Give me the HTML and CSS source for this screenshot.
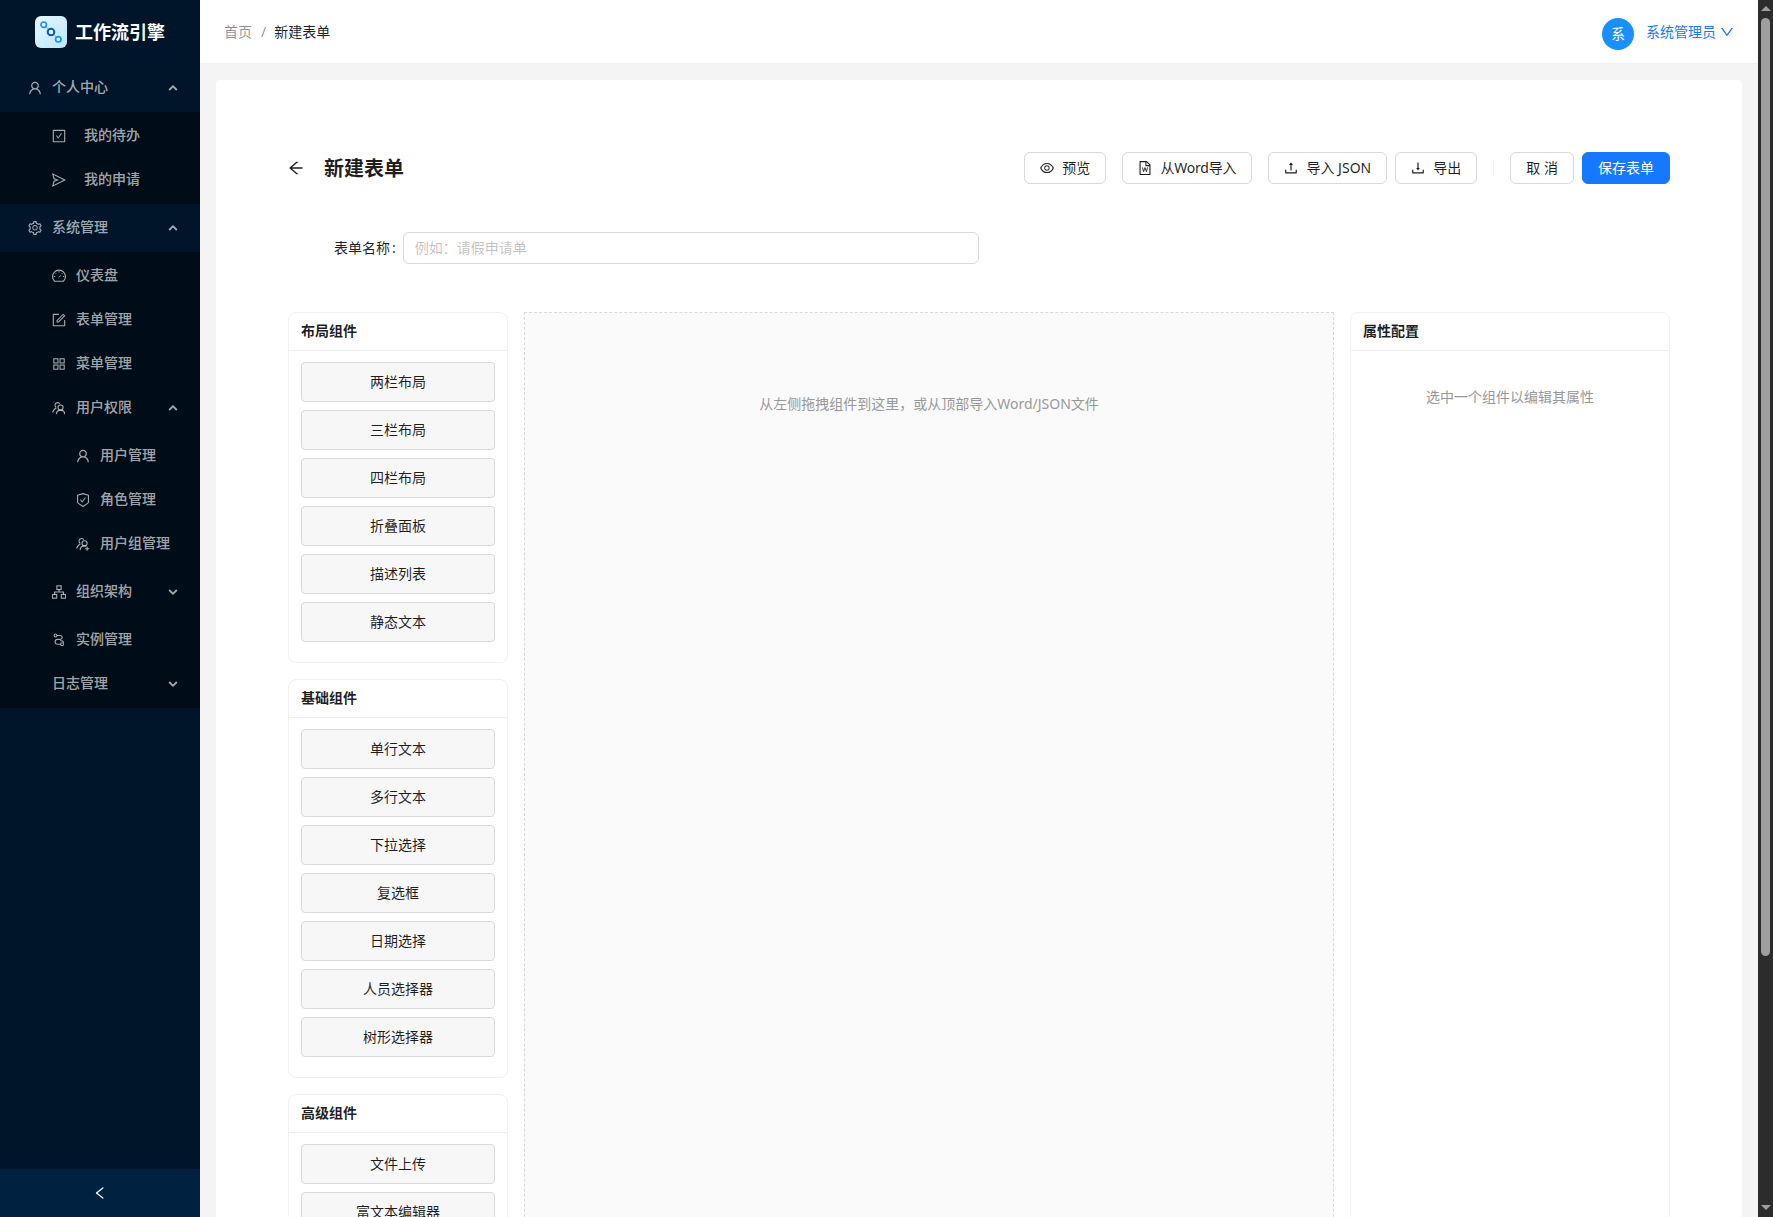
FILE: index.html
```html
<!DOCTYPE html>
<html lang="zh-CN">
<head>
<meta charset="utf-8">
<title>新建表单 - 工作流引擎</title>
<link rel="stylesheet" href="styles.css">
</head>
<body>
<svg class="sprite" aria-hidden="true">
  <symbol id="user" viewBox="64 64 896 896"><path d="M858.5 763.6a374 374 0 00-80.6-119.5 375.63 375.63 0 00-119.5-80.6c-.4-.2-.8-.3-1.2-.5C719.5 518 760 444.7 760 362c0-137-111-248-248-248S264 225 264 362c0 82.7 40.5 156 102.8 201.1-.4.2-.8.3-1.2.5-44.8 18.9-85 46-119.5 80.6a375.63 375.63 0 00-80.6 119.5A371.7 371.7 0 00136 901.8a8 8 0 008 8.2h60c4.4 0 7.9-3.5 8-7.8 2-77.2 33-149.5 87.8-204.3 56.7-56.7 132-87.9 212.2-87.9s155.5 31.2 212.2 87.9C779 752.7 810 825 812 902.2c.1 4.4 3.6 7.8 8 7.8h60a8 8 0 008-8.2c-1-47.8-10.9-94.3-29.5-138.2zM512 534c-45.9 0-89.1-17.9-121.6-50.4S340 407.9 340 362c0-45.9 17.9-89.1 50.4-121.6S466.1 190 512 190s89.1 17.9 121.6 50.4S684 316.1 684 362c0 45.9-17.9 89.1-50.4 121.6S557.9 534 512 534z"/></symbol>
  <symbol id="check-square" viewBox="64 64 896 896"><path d="M433.1 657.7a31.8 31.8 0 0051.7 0l210.6-292c3.8-5.3 0-12.7-6.5-12.7H642c-10.2 0-19.9 4.9-25.9 13.3L459 584.3l-71.2-98.8c-6-8.3-15.6-13.3-25.9-13.3H315c-6.5 0-10.3 7.4-6.5 12.7l124.6 172.8z"/><path d="M880 112H144c-17.7 0-32 14.3-32 32v736c0 17.7 14.3 32 32 32h736c17.7 0 32-14.3 32-32V144c0-17.7-14.3-32-32-32zm-40 728H184V184h656v656z"/></symbol>
  <symbol id="send" viewBox="64 64 896 896"><path d="M931.4 498.9L94.9 79.5c-3.4-1.7-7.3-2.1-11-1.2a15.99 15.99 0 00-11.7 19.3l86.2 352.2c1.3 5.3 5.2 9.6 10.4 11.3l147.7 50.7-147.6 50.7c-5.2 1.8-9.1 6-10.3 11.3L72.2 926.5c-.9 3.7-.5 7.6 1.2 10.9 3.9 7.9 13.5 11.1 21.5 7.2l836.5-417c3.1-1.5 5.6-4.1 7.2-7.1 3.9-8 .7-17.6-7.2-21.6zM170.8 826.3l50.3-205.6 295.2-101.3c2.3-.8 4.2-2.6 5-5 1.4-4.2-.8-8.7-5-10.2L221.1 403 171 198.2l628 314.9-628.2 313.2z"/></symbol>
  <symbol id="setting" viewBox="64 64 896 896"><path d="M924.8 625.7l-65.5-56c3.1-19 4.7-38.4 4.7-57.8s-1.6-38.8-4.7-57.8l65.5-56a32.03 32.03 0 009.3-35.2l-.9-2.6a443.74 443.74 0 00-79.7-137.9l-1.8-2.1a32.12 32.12 0 00-35.1-9.5l-81.3 28.9c-30-24.6-63.5-44-99.7-57.6l-15.7-85a32.05 32.05 0 00-25.8-25.7l-2.7-.5c-52.1-9.4-106.9-9.4-159 0l-2.7.5a32.05 32.05 0 00-25.8 25.7l-15.8 85.4a351.86 351.86 0 00-99 57.4l-81.9-29.1a32 32 0 00-35.1 9.5l-1.8 2.1a446.02 446.02 0 00-79.7 137.9l-.9 2.6c-4.5 12.5-.8 26.5 9.3 35.2l66.3 56.6c-3.1 18.8-4.6 38-4.6 57.1 0 19.2 1.5 38.4 4.6 57.1L99 625.5a32.03 32.03 0 00-9.3 35.2l.9 2.6c18.1 50.4 44.9 96.9 79.7 137.9l1.8 2.1a32.12 32.12 0 0035.1 9.5l81.9-29.1c29.8 24.5 63.1 43.9 99 57.4l15.8 85.4a32.05 32.05 0 0025.8 25.7l2.7.5a449.4 449.4 0 00159 0l2.7-.5a32.05 32.05 0 0025.8-25.7l15.7-85a350 350 0 0099.7-57.6l81.3 28.9a32 32 0 0035.1-9.5l1.8-2.1c34.8-41.1 61.6-87.5 79.7-137.9l.9-2.6c4.5-12.3.8-26.3-9.3-35zM788.3 465.9c2.5 15.1 3.8 30.6 3.8 46.1s-1.3 31-3.8 46.1l-6.6 40.1 74.7 63.9a370.03 370.03 0 01-42.6 73.6L721 702.8l-31.4 25.8c-23.9 19.6-50.5 35-79.3 45.8l-38.1 14.3-17.9 97a377.5 377.5 0 01-85 0l-17.9-97.2-37.8-14.5c-28.5-10.8-55-26.2-78.7-45.7l-31.4-25.9-93.4 33.2c-17-22.9-31.2-47.6-42.6-73.6l75.5-64.5-6.5-40c-2.4-14.9-3.7-30.3-3.7-45.5 0-15.3 1.2-30.6 3.7-45.5l6.5-40-75.5-64.5c11.3-26.1 25.6-50.7 42.6-73.6l93.4 33.2 31.4-25.9c23.7-19.5 50.2-34.9 78.7-45.7l37.9-14.3 17.9-97.2c28.1-3.2 56.8-3.2 85 0l17.9 97 38.1 14.3c28.7 10.8 55.4 26.2 79.3 45.8l31.4 25.8 92.8-32.9c17 22.9 31.2 47.6 42.6 73.6L781.8 426l6.5 39.9zM512 326c-97.2 0-176 78.8-176 176s78.8 176 176 176 176-78.8 176-176-78.8-176-176-176zm79.2 255.2A111.6 111.6 0 01512 614c-29.9 0-58-11.7-79.2-32.8A111.6 111.6 0 01400 502c0-29.9 11.7-58 32.8-79.2C454 401.6 482.1 390 512 390c29.9 0 58 11.6 79.2 32.8A111.6 111.6 0 01624 502c0 29.9-11.7 58-32.8 79.2z"/></symbol>
  <symbol id="dashboard" viewBox="64 64 896 896"><g fill="none" stroke="currentColor" stroke-width="72"><path d="M232 848A412 412 0 1 1 792 848Z" stroke-linejoin="round"/><path d="M512 205v85M275 315l52 52M749 315l-52 52M180 540h90M760 540h84M500 600l130-130" stroke-width="64"/></g></symbol>
  <symbol id="form" viewBox="64 64 896 896"><path d="M904 512h-56c-4.4 0-8 3.6-8 8v320H184V184h320c4.4 0 8-3.6 8-8v-56c0-4.4-3.6-8-8-8H144c-17.7 0-32 14.3-32 32v736c0 17.7 14.3 32 32 32h736c17.7 0 32-14.3 32-32V520c0-4.4-3.6-8-8-8z"/><path d="M355.9 534.9L354 653.8c-.1 8.9 7.1 16.2 16 16.2h.4l118-2.9c2-.1 4-.9 5.4-2.3l415.9-415c3.1-3.1 3.1-8.2 0-11.3L785.4 114.3c-1.6-1.6-3.6-2.3-5.7-2.3s-4.1.8-5.7 2.3l-415.8 415a8.3 8.3 0 00-2.3 5.6zm63.5 23.6L779.7 199l45.2 45.1-360.5 359.7-45.7 1.1.7-46.4z"/></symbol>
  <symbol id="appstore" viewBox="64 64 896 896"><g fill="none" stroke="currentColor" stroke-width="68"><rect x="178" y="178" width="268" height="268"/><rect x="578" y="178" width="268" height="268"/><rect x="178" y="578" width="268" height="268"/><rect x="578" y="578" width="268" height="268"/></g></symbol>
  <symbol id="team" viewBox="64 64 896 896"><g fill="none" stroke="currentColor" stroke-width="72"><circle cx="610" cy="480" r="164"/><path d="M344 904c6-150 118-260 266-260s260 110 266 260M560 240A168 168 0 1 0 330 478M116 800c6-130 90-220 228-286"/></g></symbol>
  <symbol id="safety" viewBox="64 64 896 896"><path fill="none" stroke="currentColor" stroke-width="72" stroke-linejoin="round" d="M512 102L164 210v442c0 50 348 270 348 270s348-220 348-270V210Z"/><path d="M433.1 657.7a31.8 31.8 0 0051.7 0l210.6-292c3.8-5.3 0-12.7-6.5-12.7H642c-10.2 0-19.9 4.9-25.9 13.3L459 584.3l-71.2-98.8c-6-8.3-15.6-13.3-25.9-13.3H315c-6.5 0-10.3 7.4-6.5 12.7l124.6 172.8z"/></symbol>
  <symbol id="group-add" viewBox="64 64 896 896"><g fill="none" stroke="currentColor" stroke-width="72"><circle cx="610" cy="470" r="164"/><path d="M330 904c6-150 118-270 280-270 50 0 85 8 120 24M560 230A168 168 0 1 0 330 468M116 800c6-130 90-220 228-286M640 814h270M775 690v246"/></g></symbol>
  <symbol id="apartment" viewBox="64 64 896 896"><g fill="none" stroke="currentColor" stroke-width="72"><rect x="376" y="116" width="272" height="236"/><rect x="92" y="672" width="272" height="236"/><rect x="660" y="672" width="272" height="236"/><path d="M512 352v160M228 672V512h568v160"/></g></symbol>
  <symbol id="node-index" viewBox="64 64 896 896"><g fill="none" stroke="currentColor" stroke-width="68"><circle cx="290" cy="220" r="92"/><path d="M382 220h190c190 0 190 250 20 250H420c-210 0-210 310 0 310h200"/><circle cx="710" cy="780" r="92"/><path d="M580 560h100c70 0 120 50 120 130"/></g></symbol>
  <symbol id="down" viewBox="64 64 896 896"><path d="M884 256h-75c-5.1 0-9.9 2.5-12.9 6.6L512 654.2 227.9 262.6c-3-4.1-7.8-6.6-12.9-6.6h-75c-6.5 0-10.3 7.4-6.5 12.7l352.6 486.1c12.8 17.6 39 17.6 51.7 0l352.6-486.1c3.9-5.3.1-12.7-6.4-12.7z"/></symbol>
  <symbol id="left" viewBox="64 64 896 896"><path d="M724 218.3V141c0-6.7-7.7-10.4-12.9-6.3L260.3 486.8a31.86 31.86 0 000 50.3l450.8 352.1c5.3 4.1 12.9.4 12.9-6.3v-77.3c0-4.9-2.3-9.6-6.1-12.6l-360-281 360-281.1c3.8-3 6.1-7.7 6.1-12.6z"/></symbol>
  <symbol id="arrow-left" viewBox="64 64 896 896"><path d="M872 474H286.9l350.2-304c5.6-4.9 2.2-14-5.2-14h-88.5c-3.9 0-7.6 1.4-10.5 3.9L155 487.8a31.96 31.96 0 000 48.3L535.1 866c1.5 1.3 3.3 2 5.2 2h91.5c7.4 0 10.8-9.2 5.2-14L286.9 550H872c4.4 0 8-3.6 8-8v-60c0-4.4-3.6-8-8-8z"/></symbol>
  <symbol id="eye" viewBox="64 64 896 896"><path d="M942.2 486.2C847.4 286.5 704.1 186 512 186c-192.2 0-335.4 100.5-430.2 300.3a60.3 60.3 0 000 51.5C176.6 737.5 319.9 838 512 838c192.2 0 335.4-100.5 430.2-300.3 7.7-16.2 7.7-35 0-51.5zM512 766c-161.3 0-279.4-81.8-362.7-254C232.6 339.8 350.7 258 512 258c161.3 0 279.4 81.8 362.7 254C791.5 684.2 673.4 766 512 766zm-4-430c-97.2 0-176 78.8-176 176s78.8 176 176 176 176-78.8 176-176-78.8-176-176-176zm0 288c-61.9 0-112-50.1-112-112s50.1-112 112-112 112 50.1 112 112-50.1 112-112 112z"/></symbol>
  <symbol id="file-word" viewBox="64 64 896 896"><path d="M854.6 288.6L639.4 73.4c-6-6-14.1-9.4-22.6-9.4H192c-17.7 0-32 14.3-32 32v832c0 17.7 14.3 32 32 32h640c17.7 0 32-14.3 32-32V311.3c0-8.5-3.4-16.7-9.4-22.7zM790.2 326H602V137.8L790.2 326zm1.8 562H232V136h302v216a42 42 0 0042 42h216v494z"/><path fill="none" stroke="currentColor" stroke-width="56" d="M345 470l75 275 92-260 92 260 75-275"/></symbol>
  <symbol id="upload" viewBox="64 64 896 896"><path d="M400 317.7h73.9V656c0 4.4 3.6 8 8 8h60c4.4 0 8-3.6 8-8V317.7H624c6.7 0 10.4-7.7 6.3-12.9L518.3 163a8 8 0 00-12.6 0l-112 141.7c-4.1 5.3-.4 13 6.3 13zM878 626h-60c-4.4 0-8 3.6-8 8v154H214V634c0-4.4-3.6-8-8-8h-60c-4.4 0-8 3.6-8 8v198c0 17.7 14.3 32 32 32h684c17.7 0 32-14.3 32-32V634c0-4.4-3.6-8-8-8z"/></symbol>
  <symbol id="download" viewBox="64 64 896 896"><path d="M505.7 661a8 8 0 0012.6 0l112-141.7c4.1-5.2.4-12.9-6.3-12.9h-74.1V168c0-4.4-3.6-8-8-8h-60c-4.4 0-8 3.6-8 8v338.3H400c-6.7 0-10.4 7.7-6.3 12.9l112 141.8zM878 626h-60c-4.4 0-8 3.6-8 8v154H214V634c0-4.4-3.6-8-8-8h-60c-4.4 0-8 3.6-8 8v198c0 17.7 14.3 32 32 32h684c17.7 0 32-14.3 32-32V634c0-4.4-3.6-8-8-8z"/></symbol>
  <symbol id="caret" viewBox="0 0 10 10"><path d="M1.2 7L5 3.2 8.800 7" fill="none" stroke="currentColor" stroke-width="1.8"/></symbol>
</svg>

<div class="app">
  <aside class="sider">
    <div class="brand">
      <svg class="brand-logo" viewBox="0 0 32 32">
        <defs><linearGradient id="tile" x1="0" y1="0" x2="1" y2="1"><stop offset="0" stop-color="#e6f7ff"/><stop offset="1" stop-color="#bae7ff"/></linearGradient></defs>
        <rect width="32" height="32" rx="6" fill="url(#tile)"/>
        <path d="M8.500 8.500L23.500 23.500" stroke="#a6c4dc" stroke-width="1.5"/>
        <g fill="#e6f7ff" stroke-width="1.700"><circle cx="8.700" cy="8.700" r="2.700" stroke="#1890ff"/><circle cx="16" cy="16" r="3.300" stroke="#0958b9" stroke-width="2"/><circle cx="23.300" cy="23.300" r="2.700" stroke="#1890ff"/></g>
      </svg>
      <span class="brand-name">工作流引擎</span>
    </div>
    <nav class="menu">
      <div class="item"><svg class="icon"><use href="#user"/></svg><span>个人中心</span><svg class="caret"><use href="#caret"/></svg></div>
      <div class="submenu">
        <div class="item level-2 wide"><svg class="icon"><use href="#check-square"/></svg><span>我的待办</span></div>
        <div class="item level-2 wide"><svg class="icon"><use href="#send"/></svg><span>我的申请</span></div>
      </div>
      <div class="item"><svg class="icon"><use href="#setting"/></svg><span>系统管理</span><svg class="caret"><use href="#caret"/></svg></div>
      <div class="submenu">
        <div class="item level-2"><svg class="icon"><use href="#dashboard"/></svg><span>仪表盘</span></div>
        <div class="item level-2"><svg class="icon"><use href="#form"/></svg><span>表单管理</span></div>
        <div class="item level-2"><svg class="icon"><use href="#appstore"/></svg><span>菜单管理</span></div>
        <div class="item level-2"><svg class="icon"><use href="#team"/></svg><span>用户权限</span><svg class="caret"><use href="#caret"/></svg></div>
        <div class="submenu">
          <div class="item level-3"><svg class="icon"><use href="#user"/></svg><span>用户管理</span></div>
          <div class="item level-3"><svg class="icon"><use href="#safety"/></svg><span>角色管理</span></div>
          <div class="item level-3"><svg class="icon"><use href="#group-add"/></svg><span>用户组管理</span></div>
        </div>
        <div class="item level-2 collapsed"><svg class="icon"><use href="#apartment"/></svg><span>组织架构</span><svg class="caret"><use href="#caret"/></svg></div>
        <div class="item level-2"><svg class="icon"><use href="#node-index"/></svg><span>实例管理</span></div>
        <div class="item level-2 collapsed last"><span>日志管理</span><svg class="caret"><use href="#caret"/></svg></div>
      </div>
    </nav>
    <div class="trigger"><svg class="icon"><use href="#left"/></svg></div>
  </aside>

  <div class="main">
    <header class="header">
      <div class="breadcrumb"><span>首页</span><span class="sep">/</span><span class="current">新建表单</span></div>
      <div class="account"><span class="avatar">系</span><span class="account-name">系统管理员</span><svg class="account-down"><use href="#down"/></svg></div>
    </header>
    <main class="page">
      <div class="page-head">
        <svg class="back"><use href="#arrow-left"/></svg>
        <h1>新建表单</h1>
        <div class="actions">
          <button class="btn gap-lg"><svg class="icon"><use href="#eye"/></svg>预览</button>
          <button class="btn gap-lg btn-word"><svg class="icon"><use href="#file-word"/></svg>从Word导入</button>
          <button class="btn btn-json"><svg class="icon"><use href="#upload"/></svg>导入 JSON</button>
          <button class="btn"><svg class="icon"><use href="#download"/></svg>导出</button>
          <i class="divider"></i>
          <button class="btn">取 消</button>
          <button class="btn primary">保存表单</button>
        </div>
      </div>
      <div class="form-row"><label for="name">表单名称<span class="colon">:</span></label><input id="name" type="text" placeholder="例如：请假申请单"></div>
      <div class="designer">
        <div class="palette">
          <section class="card"><h2>布局组件</h2><div class="card-body"><div class="comp">两栏布局</div><div class="comp">三栏布局</div><div class="comp">四栏布局</div><div class="comp">折叠面板</div><div class="comp">描述列表</div><div class="comp">静态文本</div></div></section>
          <section class="card"><h2>基础组件</h2><div class="card-body"><div class="comp">单行文本</div><div class="comp">多行文本</div><div class="comp">下拉选择</div><div class="comp">复选框</div><div class="comp">日期选择</div><div class="comp">人员选择器</div><div class="comp">树形选择器</div></div></section>
          <section class="card"><h2>高级组件</h2><div class="card-body"><div class="comp">文件上传</div><div class="comp">富文本编辑器</div></div></section>
        </div>
        <div class="canvas">从左侧拖拽组件到这里，或从顶部导入Word/JSON文件</div>
        <section class="card props"><h2>属性配置</h2><p>选中一个组件以编辑其属性</p></section>
      </div>
    </main>
  </div>

  <div class="scrollbar"><i class="arrow-up"></i><i class="thumb"></i><i class="arrow-down"></i></div>
</div>
</body>
</html>
```
FILE: styles.css
```css
* { box-sizing: border-box; }
body {
  margin: 0;
  overflow: hidden;
  font: 14px/22px "Noto Sans", "Noto Sans CJK SC", sans-serif;
  color: rgba(0, 0, 0, .88);
}
.sprite { display: none; }
svg { fill: currentColor; flex: none; }
.icon { width: 14px; height: 14px; }
.app { display: flex; height: 1217px; overflow: hidden; background: #f4f4f4; }

.sider { width: 200px; flex: none; display: flex; flex-direction: column; background: #001529; color: rgba(255, 255, 255, .65); }
.brand { height: 64px; flex: none; display: flex; align-items: center; justify-content: center; gap: 8px; color: #fff; }
.brand-logo { width: 32px; height: 32px; }
.brand-name { font-size: 18px; font-weight: 700; }
.menu { flex: 1; display: flow-root; font-weight: 500; }
.item { display: flex; align-items: center; gap: 10px; height: 40px; margin: 4px 0; padding: 0 22px 0 28px; }
.item span { padding-bottom: 2px; }
.submenu { display: flow-root; background: #000c17; }
.level-2 { padding-left: 52px; }
.level-3 { padding-left: 76px; }
.wide { gap: 18px; }
.caret { width: 10px; height: 10px; margin-left: auto; }
.collapsed { margin-bottom: 8px; }
.collapsed.last { margin-bottom: 4px; }
.collapsed .caret { transform: rotate(180deg); }
.trigger { height: 48px; display: flex; align-items: center; justify-content: center; background: #002140; color: #fff; }

.main { flex: 1; min-width: 0; display: flex; flex-direction: column; }
.header { height: 64px; flex: none; display: flex; align-items: center; justify-content: space-between; padding: 0 24px; background: #fff; border-bottom: 1px solid #f0f0f0; }
.breadcrumb { display: flex; color: rgba(0, 0, 0, .45); }
.sep { margin: 0 8px 0 9px; }
.current { color: rgba(0, 0, 0, .88); }
.account { display: flex; align-items: center; color: #1677ff; }
.avatar { width: 32px; height: 32px; margin: 4px 12px 0 0; border-radius: 50%; background: #1890ff; color: #fff; line-height: 32px; text-align: center; }
.account-down { width: 14px; height: 14px; margin-left: 4px; }

.page { flex: 1; margin: 16px 16px 0; padding: 72px 72px 0; background: #fff; border-radius: 4px 4px 0 0; }
.page-head { display: flex; align-items: center; height: 32px; }
.back { width: 16px; height: 16px; margin-right: 20px; }
h1 { margin: 0; padding-top: 2px; font-size: 20px; line-height: 32px; font-weight: 600; }
.actions { display: flex; align-items: center; gap: 8px; margin-left: auto; }
.btn { display: flex; align-items: center; justify-content: center; gap: 8px; height: 32px; padding: 0 15px; font: inherit; color: inherit; background: #fff; border: 1px solid #d9d9d9; border-radius: 6px; white-space: nowrap; }
.btn-word { width: 130px; padding: 0; letter-spacing: -.2px; }
.btn-json { width: 119px; padding: 0; }
.gap-lg { margin-right: 8px; }
.primary { background: #1677ff; border-color: #1677ff; color: #fff; }
.divider { width: 1px; height: 13px; margin: 0 8px; background: #f0f0f0; }

.form-row { display: flex; align-items: center; margin: 48px 0; padding-left: 46px; }
.colon { margin: 0 7px 0 2px; }
.form-row input { width: 576px; height: 32px; padding: 0 11px 2px; font: inherit; border: 1px solid #d9d9d9; border-radius: 6px; }
.form-row input::placeholder { color: rgba(0, 0, 0, .25); }

.designer { display: flex; gap: 16px; height: 1000px; }
.palette { width: 220px; display: flex; flex-direction: column; gap: 16px; }
.card { flex: none; border: 1px solid #f0f0f0; border-radius: 8px; background: #fff; }
.card h2 { height: 38px; margin: 0 0 -1px; padding: 0 12px; font-size: 14px; line-height: 36px; font-weight: 600; border-bottom: 1px solid #f0f0f0; }
.card-body { padding: 12px 12px 20px; display: flex; flex-direction: column; gap: 8px; }
.comp { height: 40px; line-height: 37px; text-align: center; background: #f7f7f7; border: 1px solid #d9d9d9; border-radius: 4px; }
.canvas { flex: 1; padding-top: 80px; text-align: center; color: #999; background: #fafafa; border: 1px dashed #d9d9d9; }
.props { width: 320px; }
.props p { margin: 36px 0 0; text-align: center; color: #999; }

.scrollbar { width: 15px; flex: none; display: flex; flex-direction: column; align-items: center; background: #2c2c2c; }
.arrow-up, .arrow-down { border: solid transparent; border-width: 0 5px; }
.arrow-up { margin-top: 6px; border-bottom: 5px solid #9f9f9f; }
.thumb { width: 9px; height: 938px; margin-top: 7px; border-radius: 5px; background: #9f9f9f; }
.arrow-down { margin-top: auto; margin-bottom: 7px; border-top: 5px solid #9f9f9f; }
```
